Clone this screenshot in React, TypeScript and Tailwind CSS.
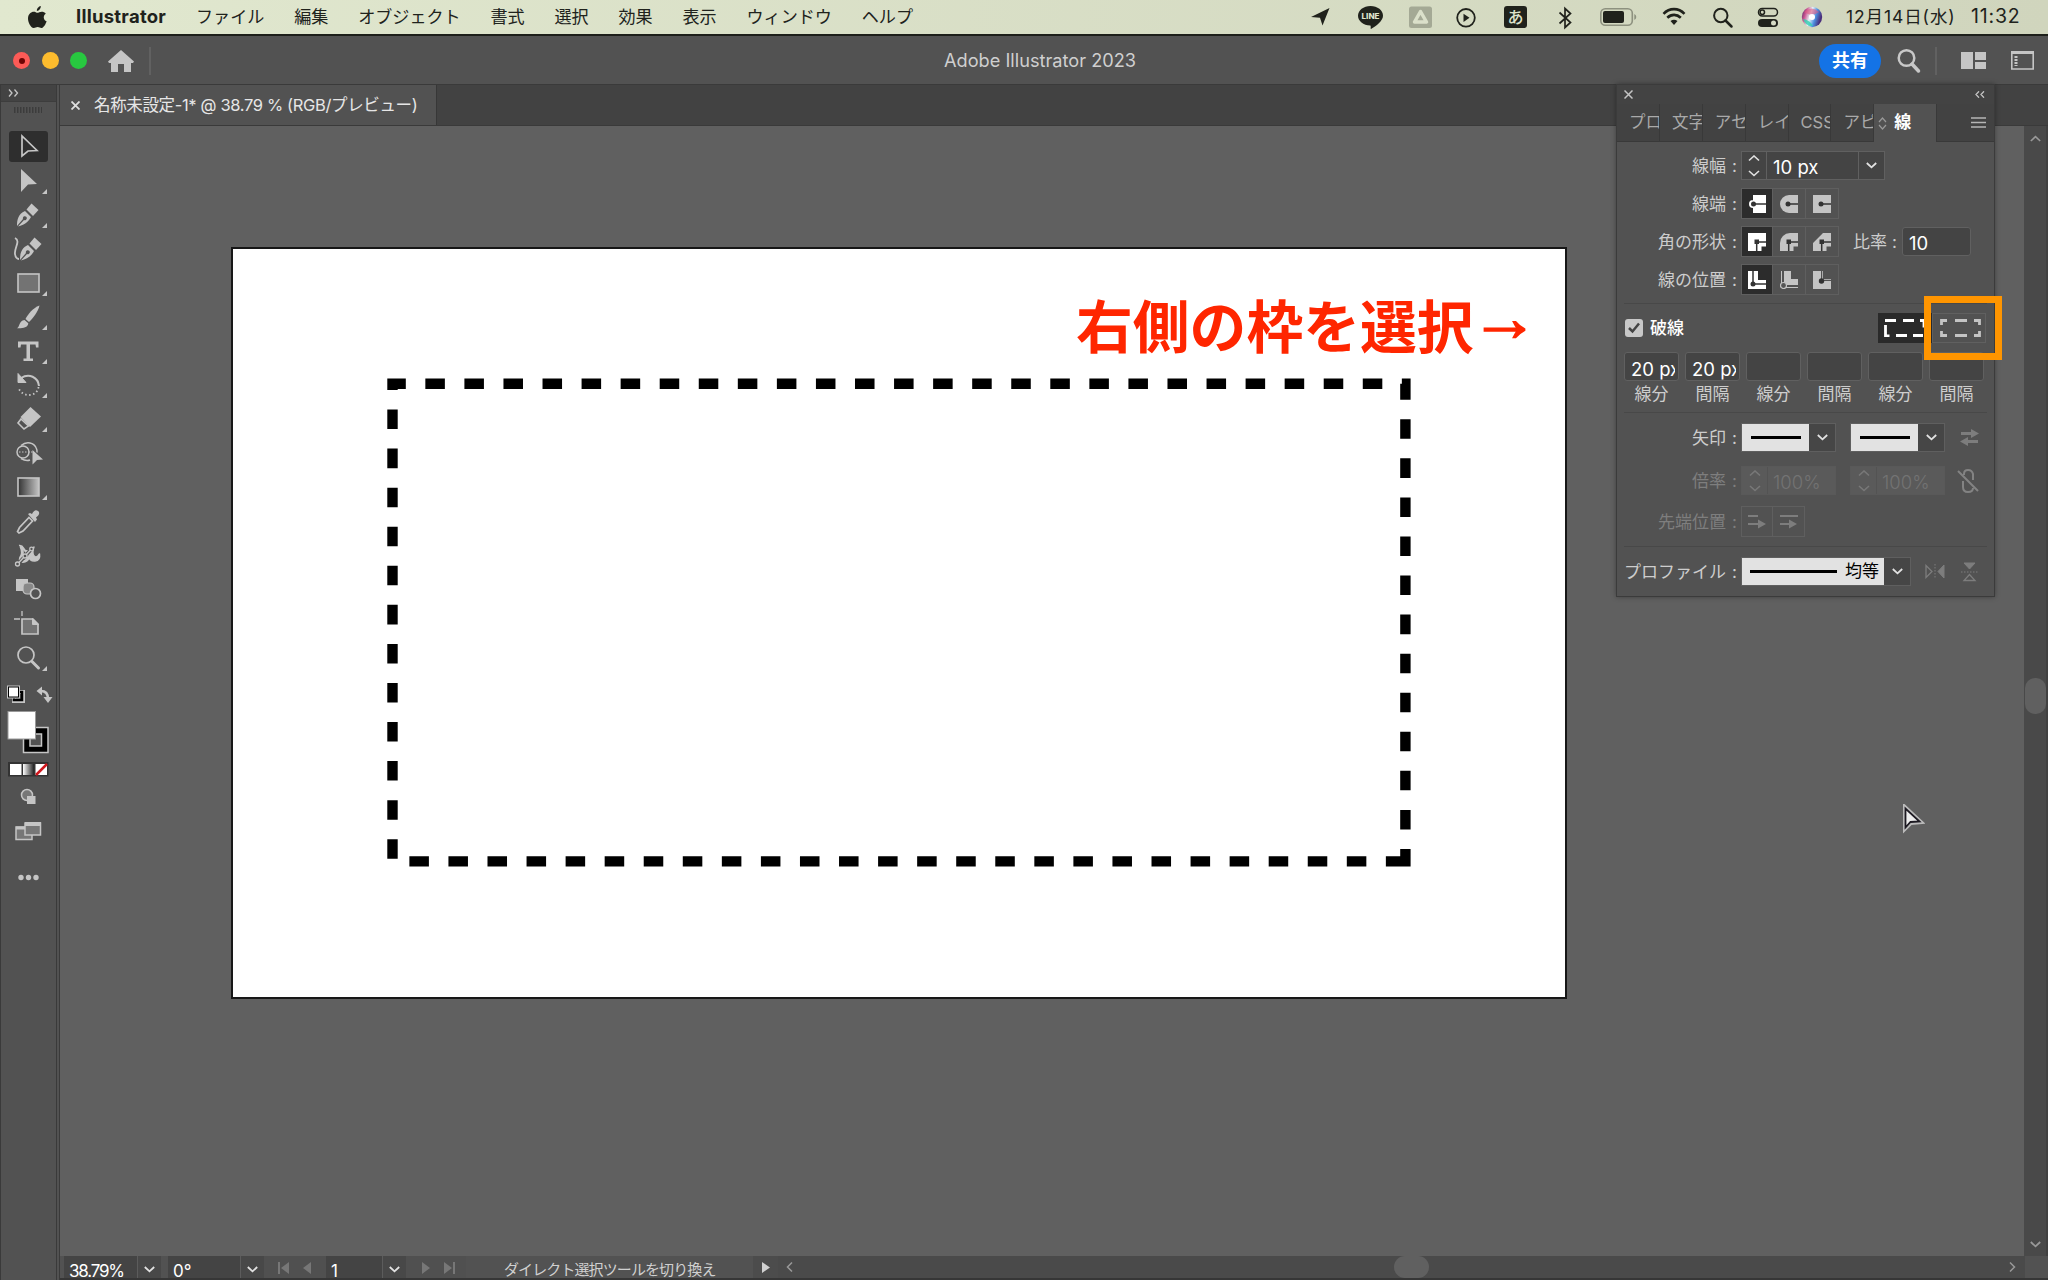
import type { ReactNode } from "react";

const jp = "font-['Inter','Noto_Sans_CJK_JP',sans-serif]";

const menus = ["ファイル", "編集", "オブジェクト", "書式", "選択", "効果", "表示", "ウィンドウ", "ヘルプ"];

function MenuBar() {
  return (
    <div className="flex h-9 items-center border-b-2 border-[#1d1f1a] bg-linear-to-r from-[#e1e8cf] to-[#d0d5bd] text-[17.100px] text-[#20221c]">
      <svg className="ml-[28px] h-[23px] w-[19px] shrink-0" viewBox="0 0 19 23" fill="currentColor">
        <path d="M12.8 0c.2 2.300-1.700 4.800-3.900 4.900C8.600 2.700 10.600.400 12.800 0zM17.800 7.700c-3.100 1.900-2.500 6.300.8 7.600-.8 2.600-2.700 6.200-4.800 6.700-1.600.2-2.400-.9-4.100-.9s-2.600 1-4 .9C2.500 21.700 0 16.300 0 12.500c0-5.500 5-7.800 7.700-6.200 1.400.7 2 .7 3.500 0 2.300-1 5-.6 6.600 1.400z" />
      </svg>
      <b className="ml-[29px] w-[120px] text-[18.500px] tracking-[0.250px]">Illustrator</b>
      <div className="flex gap-[29.800px]">
        {menus.map((m) => (
          <span key={m} className="whitespace-nowrap">{m}</span>
        ))}
      </div>
      <svg className="ml-auto h-[34px] w-[516px] shrink-0" viewBox="1310 0 516 34" fill="none" stroke="#20221c">
        <path d="M1329.500 8 1322.500 25.500 1320 17.800 1311 17z" fill="#20221c" stroke="none" />
        <path d="M1370.500 6c7 0 12.500 4.300 12.500 9.800 0 5-7 10.600-12 13.200-.7 0 .2-2.700-.7-3.400-7-.3-12.300-4.500-12.300-9.800 0-5.500 5.500-9.800 12.500-9.800z" fill="#20221c" stroke="none" />
        <text x="1361.500" y="18.500" textLength="18" lengthAdjust="spacingAndGlyphs" fontSize="7.500" fontWeight="800" fill="#dfe5cd" stroke="none">LINE</text>
        <rect x="1409" y="6.500" width="23" height="21.500" rx="2.500" fill="#a4a995" stroke="none" />
        <path d="M1420.500 11.500l6 10.500h-12z" strokeWidth="3.500" stroke="#dbe0ca" strokeLinejoin="round" />
        <circle cx="1466" cy="17.800" r="8.800" strokeWidth="1.800" />
        <path d="M1463.500 13.700v8.200l6-4.100z" fill="#20221c" stroke="none" />
        <rect x="1504" y="6" width="23" height="22" rx="3" fill="#20221c" stroke="none" />
        <text x="1507.500" y="23" fontSize="16" fontWeight="500" fill="#dde2cb" stroke="none">あ</text>
        <path d="M1559.500 12.500l11 10-5.500 5v-19l5.500 5-11 10" strokeWidth="1.700" />
        <rect x="1600.800" y="8.800" width="31.500" height="16.500" rx="4.500" stroke="#8d917f" strokeWidth="1.600" />
        <rect x="1603" y="11" width="21" height="12" rx="2" fill="#20221c" stroke="none" />
        <path d="M1634.300 14v6q2-1 2-3t-2-3z" fill="#8d917f" stroke="none" />
        <path d="M1663.500 13.800c6-6.200 15-6.200 21 0M1667.300 17.800c4-3.900 9.500-3.900 13.500 0" strokeWidth="2.600" />
        <path d="M1670.500 21q3.500-2.700 7 0l-3.500 4z" fill="#20221c" stroke="none" />
        <circle cx="1720.800" cy="15.500" r="6.700" strokeWidth="2" />
        <path d="M1725.500 20.500l6 6" strokeWidth="2.500" strokeLinecap="round" />
        <rect x="1758.500" y="8.500" width="19" height="7.500" rx="3.700" strokeWidth="1.500" />
        <circle cx="1762.300" cy="12.300" r="2.200" strokeWidth="1.500" />
        <rect x="1758" y="19" width="20" height="8" rx="4" fill="#20221c" stroke="none" />
        <circle cx="1773.500" cy="23" r="2.500" fill="#d6dbc5" stroke="none" />
        <defs>
          <linearGradient id="siri" x1="0" y1="0" x2="1" y2="0.300">
            <stop offset="0" stopColor="#3a2d66" />
            <stop offset=".25" stopColor="#c9508f" />
            <stop offset=".5" stopColor="#e8f4f8" />
            <stop offset=".75" stopColor="#4d8fe0" />
            <stop offset="1" stopColor="#4a2f7c" />
          </linearGradient>
        </defs>
        <circle cx="1812" cy="17" r="10.200" fill="url(#siri)" stroke="none" />
        <path d="M1804 12q8-7 15 0-4 3-7 3t-8-3z" fill="#e05a82" opacity=".6" stroke="none" />
        <path d="M1803 19q7 1 10 7-7 1-10-7z" fill="#2fd0b0" opacity=".8" stroke="none" />
        <circle cx="1812" cy="17" r="3" fill="#fff" stroke="none" />
      </svg>
      <span className="ml-[20px] w-[125px] text-[17.500px] tracking-[0.900px] whitespace-nowrap">12月14日(水)</span>
      <span className="mr-[26px] w-[51px] text-[19.500px] tracking-[0.800px] whitespace-nowrap">11:32</span>
    </div>
  );
}

function TitleBar() {
  return (
    <div className="flex h-[48px] items-center bg-[#525252] pt-px">
      <div className="ml-[13px] flex gap-[11.500px]">
        <span className="flex size-[17px] items-center justify-center rounded-full bg-[#fc5b57]">
          <span className="size-[6px] rounded-full bg-[#6d0504]" />
        </span>
        <span className="size-[17px] rounded-full bg-[#fdbc2e]" />
        <span className="size-[17px] rounded-full bg-[#28c840]" />
      </div>
      <svg className="ml-[21px] h-[22px] w-[26px]" viewBox="0 0 26 22" fill="#c5c5c5">
        <path d="M13 0l13 11.500-1 1.500h-2v9h-7v-8h-6v8H3v-9H1L0 11.500z" />
      </svg>
      <span className="ml-[15px] h-7 w-[2px] bg-[#616161]" />
      <span className="ml-[793px] w-[193px] text-[18.200px] whitespace-nowrap text-[#cfcfcf]">Adobe Illustrator 2023</span>
      <span className="ml-auto flex h-[34px] w-[62px] items-center justify-center rounded-full bg-[#1473e6] text-[18px] font-bold text-white">共有</span>
      <svg className="ml-[16px] h-[26px] w-[24px]" viewBox="0 0 24 26" fill="none" stroke="#c8c8c8">
        <circle cx="9.500" cy="10" r="7.800" strokeWidth="2.500" />
        <path d="M15 16l6.500 7" strokeWidth="3.500" strokeLinecap="round" />
      </svg>
      <span className="ml-[14px] h-7 w-[2px] bg-[#616161]" />
      <svg className="ml-[24px] h-[17px] w-[25px]" viewBox="0 0 25 17" fill="#c5c5c5">
        <path d="M0 0h12v17H0zM14 0h11v8H14zM14 10h11v7H14z" />
      </svg>
      <svg className="mr-[14px] ml-[25px] h-[19px] w-[23px]" viewBox="0 0 23 19" fill="none" stroke="#c5c5c5">
        <path d="M.8 1h21.400v17H.8z" strokeWidth="1.600" />
        <path d="M0 1.500h23" strokeWidth="3" />
        <path d="M5 5v10" strokeWidth="3" strokeDasharray="2 1" />
      </svg>
    </div>
  );
}

const pen = (
  <>
    <path d="M5 27c0-6 1-12 8-15l6 6c-3 6-8 8-13 9.500l6-6.500a2 2 0 1 0-1-1z" fill="#c5c5c5" stroke="none" />
    <path d="M14.500 10.500l5-6 7 6.500-5.500 6z" fill="#c5c5c5" stroke="none" />
  </>
);

const tools: { icon: ReactNode; more?: boolean }[] = [
  { icon: <path d="M10 5v20l6-5 9-.5z" strokeWidth="1.700" /> },
  { icon: <path d="M9 4v23l7-7.500 9-.5z" fill="#c5c5c5" stroke="none" />, more: true },
  { icon: pen, more: true },
  {
    icon: (
      <>
        <g transform="translate(3 0)">{pen}</g>
        <path d="M3 5c6 3-1 10 0 16 .4 3 2 5 4 5" strokeWidth="1.800" />
      </>
    ),
  },
  { icon: <rect x="6" y="7" width="21" height="18" fill="#737373" strokeWidth="1.600" />, more: true },
  {
    icon: (
      <>
        <path d="M27.500 4.500C21 7 16 13 13.500 18l3.500 3C21 17 26 11 27.500 4.500z" fill="#c5c5c5" stroke="none" />
        <path d="M12.500 19l3.800 3.200C16 27 9.500 27.500 5 27.200 8 26 6.500 20 12.500 19z" fill="#c5c5c5" stroke="none" />
      </>
    ),
    more: true,
  },
  { icon: <path d="M6 6.500h20.500v6h-2.500l-.5-3H18v14h3v2.500h-9.500V23.500h3v-14H9l-.5 3H6z" fill="#c5c5c5" stroke="none" />, more: true },
  {
    icon: (
      <>
        <path d="M9 9c8-5 17-1 18 8" strokeWidth="2" />
        <path d="M6 4.500v9h8z" fill="#c5c5c5" />
        <path d="M26.500 18c-1 10-16 11-20 1" strokeWidth="1.800" strokeDasharray="1.500 2.500" />
      </>
    ),
    more: true,
  },
  {
    icon: (
      <>
        <path d="M18.500 4L29 13.500 18 24 8.500 14z" fill="#c5c5c5" stroke="none" />
        <path d="M9 16l-3 4 6 6 4.500-3z" strokeWidth="1.600" />
      </>
    ),
    more: true,
  },
  {
    icon: (
      <>
        <circle cx="11" cy="15" r="6" strokeWidth="1.500" />
        <path d="M9 8.500c6-5 13-2.500 15 2q1.500 3 1 5M9 21.500q5 3 9 1.500" strokeWidth="1.500" />
        <path d="M7 15h15" strokeDasharray="1.500 1.500" />
        <path d="M20.500 13v14.500l4.500-4.500 6-.5z" fill="#c5c5c5" stroke="none" />
      </>
    ),
  },
  { icon: <rect x="6" y="7" width="21" height="18" fill="url(#gray)" strokeWidth="1.600" />, more: true },
  {
    icon: (
      <>
        <path d="M17 11.500l3.500 3.500L11 25l-4 2-1.500-1.500 2-4z" strokeWidth="1.700" />
        <path d="M16 8l2-1 2 1c2-4 4-4.500 6-3s1.500 4-2 6.500l1 2-2 2.500z" fill="#c5c5c5" stroke="none" />
      </>
    ),
  },
  {
    icon: (
      <>
        <path d="M7 5.500q3-.5 4.500 2.500 1.500 3.500 4.500 3 3-1 6-4-2 5-.5 8 2.500 4.500 6-1 1 6-4.500 7-5 .5-6.500-5" fill="#c5c5c5" strokeWidth="1.500" strokeLinejoin="round" />
        <path d="M9 6.500q3 7-.5 11.500-1 3 2.500 3.500 4 0 6-5" strokeWidth="3" />
        <path d="M6 24L19 9.500" stroke="#535353" strokeWidth="3.500" />
        <path d="M6 23.500L19 9.500" strokeWidth="1.400" />
        <circle cx="5.500" cy="24" r="2" fill="#535353" strokeWidth="1.300" />
        <circle cx="13" cy="16" r="2" fill="#535353" strokeWidth="1.300" />
        <circle cx="19.500" cy="9" r="1.800" fill="#535353" strokeWidth="1.300" />
      </>
    ),
  },
  {
    icon: (
      <>
        <path d="M4 5h12v12H4z" fill="#c5c5c5" stroke="none" />
        <rect x="11" y="9" width="11" height="11" rx="4" fill="#888" strokeWidth="1.200" />
        <circle cx="23.500" cy="19.500" r="5" fill="#535353" strokeWidth="1.700" />
      </>
    ),
  },
  {
    icon: (
      <>
        <path d="M10 11h11l5 5v10H10z" fill="#737373" strokeWidth="1.700" />
        <path d="M20.500 10.500l6 6h-6z" fill="#c5c5c5" />
        <path d="M10 3v5M2 11h6" strokeWidth="1.300" />
      </>
    ),
  },
  {
    icon: (
      <>
        <circle cx="14" cy="13" r="8" strokeWidth="1.700" />
        <path d="M20 19.500l6.500 6.500" strokeWidth="3" strokeLinecap="round" />
      </>
    ),
    more: true,
  },
];

function ToolBar() {
  return (
    <div className="flex w-[60px] shrink-0 flex-col border-r border-[#3a3a3a] bg-[#525252]">
      <div className="flex h-full w-[57px] flex-col border-x border-[#3a3a3a]">
        <div className="flex h-[17px] items-center border-b border-[#3d3d3d] bg-[#434343] pl-[7px]">
          <svg className="h-[8px] w-[11px]" viewBox="0 0 11 8" fill="none" stroke="#c5c5c5" strokeWidth="1.300">
            <path d="M1 .5l3 3.500-3 3.500M6.500.5l3 3.500-3 3.500" />
          </svg>
        </div>
        <svg className="mt-[5px] ml-[13px] h-[6px] w-[28px]" viewBox="0 0 28 6">
          <path d="M0 3h28" stroke="#3c3c3c" strokeWidth="6" strokeDasharray="1.500 1.500" />
        </svg>
        <div className="mt-[16px] flex flex-col">
          {tools.map((t, i) => (
            <div key={i} className="flex h-[34.100px] items-center pl-[8px]">
              <svg
                className={"h-[31px] w-[39px] overflow-visible rounded-[3px] " + (i === 0 ? "bg-[#2e2e2e]" : "")}
                viewBox="-3 0 39 31"
                fill="none"
                stroke="#c5c5c5"
              >
                <defs>
                  <linearGradient id="gray">
                    <stop offset="0" stopColor="#333" />
                    <stop offset="1" stopColor="#c4c4c4" />
                  </linearGradient>
                </defs>
                {t.icon}
                {t.more && <path d="M35 24v5h-5z" fill="#c5c5c5" stroke="none" />}
              </svg>
            </div>
          ))}
        </div>
        <svg className="mt-[5px] h-[210px] w-[55px]" viewBox="1 680 55 210" fill="none" stroke="#c5c5c5">
          <rect x="14" y="692" width="9" height="9" stroke="#c5c5c5" strokeWidth="4" />
          <rect x="14" y="692" width="8" height="8" stroke="#000" strokeWidth="2.500" />
          <rect x="8" y="686.500" width="11" height="11" stroke="#c5c5c5" strokeWidth="2" />
          <rect x="8.500" y="687" width="10" height="10" fill="#fff" stroke="#000" />
          <path d="M41 691q7 0 7 8" strokeWidth="2.500" />
          <path d="M42 686.500v9l-5.500-4.500zM43.500 697h9l-4.500 6z" fill="#c5c5c5" stroke="none" />
          <rect x="23.500" y="727.500" width="24.500" height="25" fill="#000" strokeWidth="1.500" />
          <rect x="30" y="734" width="11.500" height="12" fill="#535353" strokeWidth="1.500" />
          <rect x="8" y="711.500" width="27.500" height="27.500" fill="#fff" stroke="#999" />
          <rect x="8.500" y="762.500" width="39.500" height="13.500" fill="#333" stroke="#333" />
          <rect x="10" y="764" width="11.500" height="11" fill="#fff" stroke="none" />
          <rect x="23" y="764" width="11" height="11" fill="url(#mode)" stroke="none" />
          <rect x="35.500" y="764" width="11.500" height="11" fill="#fff" stroke="none" />
          <path d="M36 775l11-11" stroke="#d0181e" strokeWidth="2.500" />
          <linearGradient id="mode">
            <stop offset="0" stopColor="#fff" />
            <stop offset="1" stopColor="#222" />
          </linearGradient>
          <circle cx="27" cy="795" r="5.500" fill="#777" strokeWidth="1.500" />
          <rect x="27" y="796" width="8.500" height="8" fill="#c5c5c5" stroke="none" />
          <rect x="16" y="827" width="16" height="12.500" fill="#777" strokeWidth="1.500" />
          <path d="M16 828h9" strokeWidth="3" />
          <rect x="25" y="823" width="15.500" height="12" fill="#777" strokeWidth="1.500" />
          <path d="M25 824h16" strokeWidth="4" />
          <circle cx="21" cy="877.500" r="2.700" fill="#c5c5c5" stroke="none" />
          <circle cx="28.500" cy="877.500" r="2.700" fill="#c5c5c5" stroke="none" />
          <circle cx="36" cy="877.500" r="2.700" fill="#c5c5c5" stroke="none" />
        </svg>
      </div>
    </div>
  );
}

function Down({ color = "#e2e2e2" }: { color?: string }) {
  return (
    <svg className="h-[7px] w-[11px]" viewBox="0 0 11 7" fill="none" stroke={color} strokeWidth="1.800">
      <path d="M.8 1l4.700 4.300L10.200 1" />
    </svg>
  );
}

function Spinner({ color = "#e2e2e2" }: { color?: string }) {
  return (
    <svg className="h-[22px] w-[12px]" viewBox="0 0 12 22" fill="none" stroke={color} strokeWidth="1.600">
      <path d="M1 5.500L6 1l5 4.500M1 16l5 4.500L11 16" />
    </svg>
  );
}

function Row({ label, dim, className, children }: { label: string; dim?: boolean; className: string; children: ReactNode }) {
  return (
    <div className={"flex items-center " + className}>
      <span className={"mr-[4px] flex w-[120px] shrink-0 justify-end pt-[2px] whitespace-nowrap " + (dim ? "text-[#7e7e7e]" : "text-[#cdcdcd]")}>
        {label}
        <span className="ml-[6px] w-[5px]">:</span>
      </span>
      {children}
    </div>
  );
}

function Choices({ icons }: { icons: ReactNode[] }) {
  return (
    <div className="flex h-[31px] border border-[#5f5f5f]">
      {icons.map((icon, i) => (
        <span
          key={i}
          className={
            "flex items-center justify-center " +
            (i === 0 ? "w-[30px] bg-[#2c2c2c] text-white" : "w-[33px] border-l border-[#5f5f5f] text-[#c4c4c4]")
          }
        >
          <svg className="size-[18px]" viewBox="0 0 18 18" fill="currentColor">{icon}</svg>
        </span>
      ))}
    </div>
  );
}

const k = "#333";
const caps = [
  <><path d="M5 0h13v18H5zM5 5a4 4 0 0 0 0 8z" /><circle cx="5.500" cy="9" r="2.500" fill={k} /><path d="M6 9h12" stroke={k} strokeWidth="1.500" /></>,
  <><path d="M9 0h9v18H9A9 9 0 0 1 9 0z" /><circle cx="8" cy="9" r="2.500" fill={k} /><path d="M8 9h10" stroke={k} strokeWidth="1.500" /></>,
  <><path d="M0 0h18v18H0z" /><circle cx="8" cy="9" r="2.500" fill={k} /><path d="M8 9h10" stroke={k} strokeWidth="1.500" /></>,
];
const cornerHole = (
  <>
    <path d="M6.500 6.500h4.500v4.500H6.500z" fill={k} />
    <path d="M8.700 18V9H18" stroke={k} strokeWidth="1.500" fill="none" />
  </>
);
const joins = [
  <><path d="M0 0h18v13.500h-4.500V18H0z" />{cornerHole}</>,
  <><path d="M10 0h8v13.500h-4.500V18H0v-8A10 10 0 0 1 10 0z" />{cornerHole}</>,
  <><path d="M10 0h8v13.500h-4.500V18H0v-8z" />{cornerHole}</>,
];
const aligns = [
  <><path d="M0 0h10v9h8v9H0z" /><path d="M5 0v13h13" stroke={k} strokeWidth="1.500" fill="none" /><circle cx="5" cy="13" r="2.500" fill={k} /></>,
  <><path d="M4 0h7v8h7v6H4z" /><path d="M1.500 0v13M5 16.500h13" stroke="#c4c4c4" fill="none" /><circle cx="3.500" cy="14.500" r="3" fill="#555" stroke="#c4c4c4" strokeWidth="1.200" /></>,
  <><path d="M0 0h8v10h10v8H0z" /><path d="M9.500 0v8.500H18" stroke="#aaa" fill="none" /><circle cx="8.500" cy="10" r="2.700" fill={k} /></>,
];

function Arrowhead({ className }: { className?: string }) {
  return (
    <div className={"flex h-[29px] border border-[#5f5f5f] " + (className ?? "")}>
      <span className="flex w-[67px] items-center justify-center bg-[#e2e2e2]">
        <span className="h-[3px] w-[50px] bg-black" />
      </span>
      <span className="flex w-[26px] items-center justify-center bg-[#464646]"><Down /></span>
    </div>
  );
}

function Percent({ className }: { className?: string }) {
  return (
    <div className={"flex h-[29px] border border-[#595959] bg-[#5a5a5a] " + (className ?? "")}>
      <span className="flex w-[26px] items-center justify-center border-r border-[#535353]"><Spinner color="#787878" /></span>
      <span className="flex w-[67px] items-center pt-[4px] pl-[5px] text-[18.500px] font-light text-[#737373]">100%</span>
    </div>
  );
}

function StrokePanel() {
  const dashes = ["20 px", "20 px", "", "", "", ""];
  return (
    <div className="absolute top-[-1px] left-[1556px] flex h-[513px] w-[379px] flex-col border border-[#3b3b3b] bg-[#525252] text-[17px] shadow-[0_0_5px_rgba(0,0,0,0.35)]">
      <div className="flex h-[19px] shrink-0 items-center justify-between bg-[#434343] pr-[9px] pl-[7px]">
        <svg className="size-[9px]" viewBox="0 0 9 9" stroke="#c5c5c5" strokeWidth="1.500"><path d="M.5.5l8 8M8.500.5l-8 8" /></svg>
        <svg className="h-[7px] w-[10px]" viewBox="0 0 10 7" fill="none" stroke="#c5c5c5" strokeWidth="1.300"><path d="M4 .3L1 3.500l3 3.200M9 .3L6 3.500l3 3.200" /></svg>
      </div>
      <div className="flex h-[38px] shrink-0 bg-[#424242] text-[#a9a9a9]">
        {["プロ", "文字", "アセ", "レイ", "CSS", "アピ"].map((t) => (
          <span key={t} className="flex w-[42.900px] items-center overflow-hidden border-r border-b border-[#393939] pl-[12px] text-[16.500px] whitespace-nowrap">{t}</span>
        ))}
        <span className="flex w-[62px] items-center bg-[#525252] pl-[4px] font-bold text-white">
          <svg className="mr-[7px] h-[13px] w-[9px]" viewBox="0 0 9 13" fill="none" stroke="#999" strokeWidth="1.200"><path d="M1 5L4.500 1 8 5M1 8l3.500 4L8 8" /></svg>
          線
        </span>
        <span className="flex grow items-center justify-end border-b border-l border-[#393939] pr-[8px]">
          <svg className="h-[11px] w-[15px]" viewBox="0 0 15 11" stroke="#b5b5b5" strokeWidth="1.500"><path d="M0 1h15M0 5.500h15M0 10h15" /></svg>
        </span>
      </div>

      <Row label="線幅" className="mt-[9px] h-[29px]">
        <div className="flex h-[29px] border border-[#606060] bg-[#444] text-white">
          <span className="flex w-[25px] items-center justify-center border-r border-[#606060]"><Spinner /></span>
          <span className="flex w-[91px] items-center pt-[5px] pl-[6px] text-[18.500px]">10 px</span>
          <span className="flex w-[26px] items-center justify-center border-l border-[#606060]"><Down /></span>
        </div>
      </Row>
      <Row label="線端" className="mt-[8px] h-[31px]"><Choices icons={caps} /></Row>
      <Row label="角の形状" className="mt-[7px] h-[31px]">
        <Choices icons={joins} />
        <span className="ml-[14px] flex w-[45px] pt-[2px] text-[#cdcdcd]">比率<span className="ml-[5px]">:</span></span>
        <span className="ml-[4px] flex h-[29px] w-[69px] items-center rounded-[3px] border border-[#606060] bg-[#444] pt-[4px] pl-[6px] text-[18.500px] text-white">10</span>
      </Row>
      <Row label="線の位置" className="mt-[7px] h-[31px]"><Choices icons={aligns} /></Row>

      <div className="mx-[7px] mt-[8px] h-px shrink-0 bg-[#484848]" />
      <div className="mt-[9px] flex h-[30px] items-center pr-[8px] pl-[8px]">
        <span className="flex size-[18px] items-center justify-center rounded-[3px] bg-[#c8c8c8]">
          <svg className="size-[12px]" viewBox="0 0 12 12" fill="none" stroke="#444" strokeWidth="2.500"><path d="M1 6l3.500 3.500L11 1.500" /></svg>
        </span>
        <b className="ml-[7px] grow pt-px font-medium text-white">破線</b>
        <span className="flex h-[30px] w-[54px] items-center bg-[#2a2a2a] pl-[6px]">
          <svg className="h-[18px] w-[41px]" viewBox="0 0 41 18" fill="none" stroke="#fff" strokeWidth="2.800">
            <path d="M1 1.500h11M19 1.500h11M36 1.500h4v7M1.500 6v11h4M12 16.500h11M29 16.500h10" />
          </svg>
        </span>
        <span className="flex h-[30px] w-[54px] items-center border border-[#606060] pl-[7px]">
          <svg className="h-[18px] w-[41px]" viewBox="0 0 41 18" fill="none" stroke="#c4c4c4" strokeWidth="2.800">
            <path d="M7 1.500H1.500V6M1.500 12v4.500H7M15 1.500h12M15 16.500h12M34 1.500h5.500V6M39.500 12v4.500H34" />
          </svg>
        </span>
      </div>
      <div className="mt-[9px] flex gap-[6px] pl-[7px]">
        {dashes.map((d, i) => (
          <div key={i} className="flex w-[55px] flex-col items-center">
            <span className="flex h-[29px] w-full items-center overflow-hidden rounded-[3px] border border-[#606060] bg-[#444] pt-[5px] pr-[3px] pl-[6px] text-[18.500px] text-white">
              <span className="overflow-hidden leading-[22px] whitespace-nowrap">{d}</span>
            </span>
            <span className="leading-[26px] text-[#cdcdcd]">{i % 2 ? "間隔" : "線分"}</span>
          </div>
        ))}
      </div>

      <div className="mx-[7px] mt-[5px] h-px shrink-0 bg-[#484848]" />
      <Row label="矢印" className="mt-[10px] h-[29px]">
        <Arrowhead />
        <Arrowhead className="ml-[14px]" />
        <svg className="ml-[15px] h-[17px] w-[19px]" viewBox="0 0 19 17" fill="#7d7d7d"><path d="M1 3h10V0l8 4.500L11 9V6H1zM18 11H8V8l-8 4.500L8 17v-3h10z" /></svg>
      </Row>
      <Row label="倍率" dim className="mt-[14px] h-[29px]">
        <Percent />
        <Percent className="ml-[14px]" />
        <svg className="ml-[12px] h-[24px] w-[22px]" viewBox="0 0 22 24" fill="none" stroke="#838383" strokeWidth="2">
          <path d="M1 2l20 20M7 6V5q0-4 4-4t5 4v6M6 12v6q0 5 5 5t5-4" />
        </svg>
      </Row>
      <Row label="先端位置" dim className="mt-[11px] h-[31px]">
        <div className="flex h-[31px] border border-[#5f5f5f]">
          <span className="flex w-[30px] items-center justify-center">
            <svg className="h-[15px] w-[18px]" viewBox="0 0 18 15" fill="#7d7d7d"><path d="M0 1h10v2H0zM0 9h10V5.500l8 4.500-8 4.500V11H0z" /></svg>
          </span>
          <span className="flex w-[32px] items-center justify-center border-l border-[#5f5f5f]">
            <svg className="h-[15px] w-[18px]" viewBox="0 0 18 15" fill="#7d7d7d"><path d="M0 1h18v2H0zM0 9h9V5.500l8 4.500-8 4.500V11H0z" /></svg>
          </span>
        </div>
      </Row>
      <div className="mx-[7px] mt-[9px] h-px shrink-0 bg-[#484848]" />
      <Row label="プロファイル" className="mt-[10px] h-[29px]">
        <div className="flex h-[29px] border border-[#5f5f5f]">
          <span className="flex w-[142px] items-center bg-[#e2e2e2] pl-[8px] text-black">
            <span className="mr-[8px] h-[3px] w-[87px] bg-black" /><span className="pt-px">均等</span>
          </span>
          <span className="flex w-[26px] items-center justify-center bg-[#464646]"><Down /></span>
        </div>
        <svg className="ml-[14px] h-[15px] w-[20px]" viewBox="0 0 20 15" fill="none" stroke="#7d7d7d"><path d="M1 1.500v12L7 7.500z" strokeWidth="1.300" /><path d="M10 0v15" strokeDasharray="1.500 1.500" /><path d="M19 1v13l-6-6.500z" fill="#7d7d7d" /></svg>
        <svg className="ml-[16px] h-[20px] w-[17px]" viewBox="0 0 17 20" fill="none" stroke="#7d7d7d"><path d="M3 1h11L8.500 7z" fill="#7d7d7d" /><path d="M0 10h17" strokeDasharray="1.500 1.500" /><path d="M3 18.500h11l-5.500-6z" strokeWidth="1.300" /></svg>
      </Row>
    </div>
  );
}

function Canvas() {
  return (
    <div className="relative min-w-0 grow overflow-hidden bg-[#606060]">
      <div className="absolute top-[121px] left-[171px] h-[752px] w-[1336px] border-2 border-[#171717] bg-white">
        <svg className="absolute top-[127px] left-[150px] h-[494px] w-[1030px]" viewBox="383 376 1030 494">
          <path d="M1405.400 861.400H392.500V383.800H1405.400Z" fill="none" stroke="#000" strokeWidth="10.400" strokeDasharray="19.530 19.530" />
        </svg>
        <p className="absolute top-[37px] left-[843px] flex text-[56.800px] leading-[84px] font-bold whitespace-nowrap text-[#ff2600]">
          右側の枠を選択
          <span className="-mt-[11px] -ml-[3px] font-['Liberation_Sans',sans-serif] text-[68px] font-normal [-webkit-text-stroke:1.500px_#ff2600]">→</span>
        </p>
      </div>
      <svg className="absolute top-[678px] left-[1843px] h-[30px] w-[22px]" viewBox="0 0 22 30">
        <path d="M1.500 2v24l6.500-6.500 11-1z" fill="#e8e8e8" stroke="#bbb" strokeWidth="3" />
        <path d="M2.500 4.500v19l5-5.500 9-.5z" fill="#eee" stroke="#1d1a22" strokeWidth="1.800" />
      </svg>
    </div>
  );
}

function StatusBar() {
  const field = "flex h-full items-center bg-[#444] pt-[9px] pl-[5px] text-[17px] text-white";
  const drop = "flex h-full w-[24px] items-center justify-center border-l border-[#5c5c5c] bg-[#484848] pt-[5px]";
  return (
    <div className="flex h-[24px] shrink-0 items-center overflow-hidden border-b-2 border-[#363636] bg-[#525252]">
      <span className={field + " ml-[4px] w-[73px]"}><span className="tracking-[-1.200px]">38.79%</span></span>
      <span className={drop}><Down /></span>
      <span className={field + " ml-[7px] w-[72px]"}>0°</span>
      <span className={drop}><Down /></span>
      <svg className="h-[22px] w-[62px] bg-[#505050]" viewBox="-2 0 62 22" fill="#777"><path d="M12 6h2v12h-2zM23 6v12l-8-6zM45 6v12l-8-6z" /></svg>
      <span className={field + " w-[56px]"}>1</span>
      <span className={drop}><Down /></span>
      <svg className="h-[22px] w-[60px] bg-[#505050]" viewBox="-2 0 60 22" fill="#777"><path d="M14 6v12l8-6zM36 6v12l8-6zM45 6h2v12h-2z" /></svg>
      <span className="w-[287px] pt-[6px] pl-[38px] text-[15px] tracking-[-0.900px] whitespace-nowrap text-[#d0d0d0]">ダイレクト選択ツールを切り換え</span>
      <span className="flex h-full w-[25px] items-center justify-center bg-[#4c4c4c] pt-px">
        <svg className="h-[11px] w-[8px]" viewBox="0 0 8 11" fill="#d0d0d0"><path d="M0 0l8 5.500L0 11z" /></svg>
      </span>
      <div className="flex h-full grow items-center bg-[#4a4a4a] pr-[9px] pl-[8px]">
        <svg className="h-[10px] w-[7px]" viewBox="0 0 7 10" fill="none" stroke="#999" strokeWidth="1.500"><path d="M6 .5L1.500 5 6 9.500" /></svg>
        <span className="ml-[601px] h-[22px] w-[35px] rounded-[11px] bg-[#606060]" />
        <svg className="ml-auto h-[10px] w-[7px]" viewBox="0 0 7 10" fill="none" stroke="#999" strokeWidth="1.500"><path d="M1 .5L5.500 5 1 9.500" /></svg>
      </div>
      <span className="h-full w-[23px] bg-[#525252]" />
    </div>
  );
}

export default function App() {
  return (
    <div className={"flex h-[1280px] w-[2048px] flex-col overflow-hidden bg-[#525252] " + jp}>
      <MenuBar />
      <TitleBar />
      <div className="flex min-h-0 grow border-t border-[#3a3a3a]">
        <ToolBar />
        <div className="relative flex min-w-0 grow flex-col">
          <div className="flex h-[41px] shrink-0 border-b border-[#3a3a3a] bg-[#424242]">
            <div className="flex w-[377px] items-center border-r border-[#373737] bg-[#525252] pl-[11px] text-[#e6e6e6]">
              <svg className="size-[9px]" viewBox="0 0 9 9" stroke="#dedede" strokeWidth="1.800"><path d="M.5.5l8 8M8.500.5l-8 8" /></svg>
              <span className="ml-[14px] text-[16.500px] tracking-[-0.350px] whitespace-nowrap">名称未設定-1* @ 38.79 % (RGB/プレビュー)</span>
            </div>
          </div>
          <div className="flex min-h-0 grow">
            <Canvas />
            <div className="flex w-[24px] shrink-0 flex-col items-center border-r-2 border-[#414141] bg-[#494949]">
              <svg className="mt-[9px] h-[7px] w-[11px] rotate-180" viewBox="0 0 11 7" fill="none" stroke="#999" strokeWidth="1.600"><path d="M.8 1l4.700 4.300L10.200 1" /></svg>
              <span className="mt-[536px] h-[36px] w-[21px] rounded-[10px] bg-[#606060]" />
              <span className="mt-auto mb-[8px] flex"><Down color="#999" /></span>
            </div>
          </div>
          <StatusBar />
          <StrokePanel />
          <div className="absolute top-[211px] left-[1864px] h-[64px] w-[78px] border-[7px] border-[#ff9500]" />
        </div>
      </div>
    </div>
  );
}
